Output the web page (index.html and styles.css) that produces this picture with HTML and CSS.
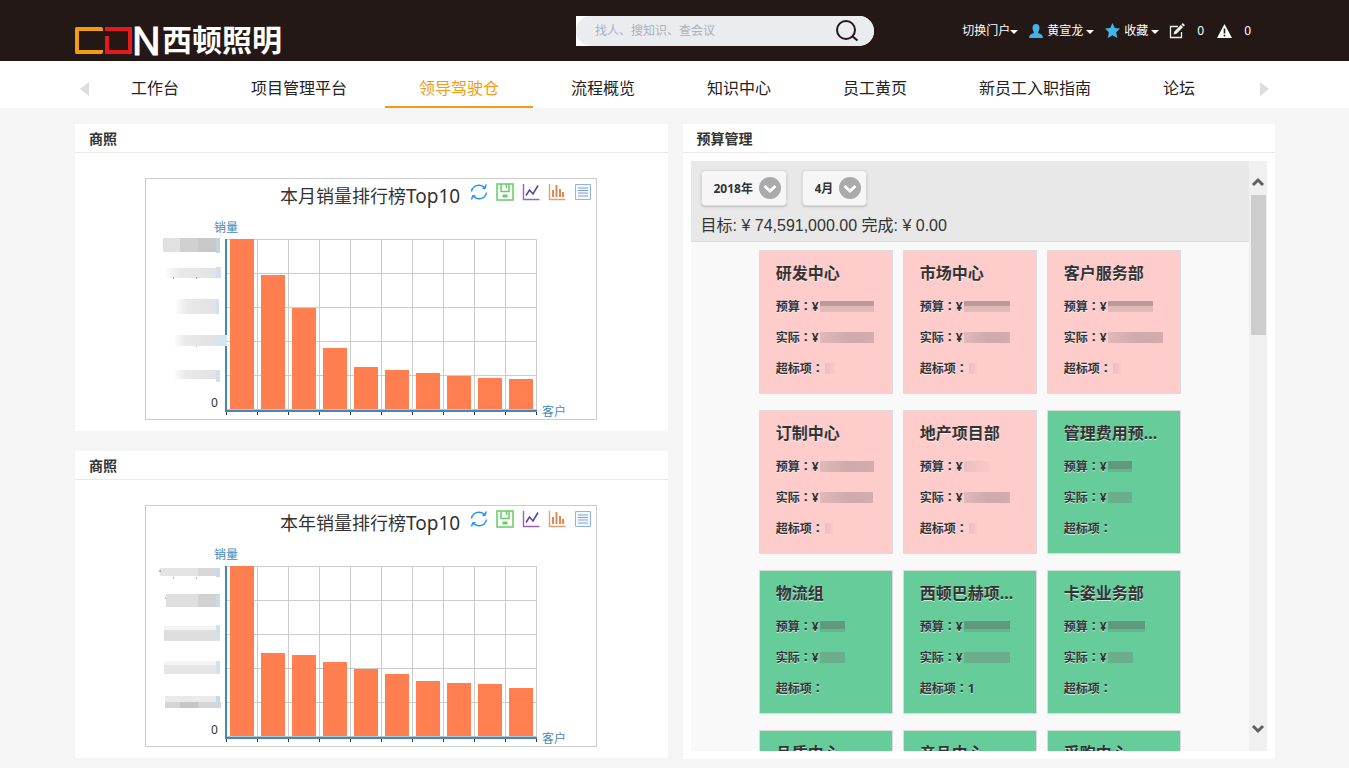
FILE: index.html
```html
<!DOCTYPE html>
<html lang="zh-CN">
<head>
<meta charset="utf-8">
<title>领导驾驶仓</title>
<link rel="stylesheet" href="styles.css">
</head>
<body>
<svg class="defs" width="0" height="0" aria-hidden="true">
  <defs>
    <g id="grid">
      <path d="M82 61.5H392M82 95.5H392M82 129.5H392M82 163.5H392M82 197.5H392" stroke="#ccc"/>
      <path d="M112.500 61V232M143.500 61V232M174.500 61V232M205.500 61V232M236.500 61V232M267.500 61V232M298.500 61V232M329.500 61V232M360.500 61V232M391.500 61V232" stroke="#ccc"/>
    </g>
    <g id="axis">
      <path d="M82 231.500H392" stroke="#b9c3c9"/>
      <path d="M81 61V234M80 233H392" stroke="#4488bb" stroke-width="2"/>
      <path d="M81.500 234V237M112.500 234V237M143.500 234V237M174.500 234V237M205.500 234V237M236.500 234V237M267.500 234V237M298.500 234V237M329.500 234V237M360.500 234V237M391.500 234V237" stroke="#333"/>
    </g>
    <symbol id="i-refresh" viewBox="0 0 18 18"><g fill="none" stroke="#1e90ff" stroke-width="1.500"><path d="M1.500 8.500C2 4.500 5.500 2 9.500 2.200C11.500 2.300 13.200 3.200 14.500 4.500M12.500 5.500L15 5.200L16.200 1.500M16.500 9.500C16 13.500 12.500 16 8.500 15.800C6.500 15.700 4.800 14.800 3.500 13.500M5.500 12.700L2.800 13L1.500 16.500"/></g></symbol>
    <symbol id="i-save" viewBox="0 0 18 18"><g fill="none" stroke="#66cc66" stroke-width="1.500"><path d="M1 1H17V17H1ZM5 1V8.500H13V1M10.500 1V5"/><path d="M6.500 13H11.500" stroke-width="3"/></g></symbol>
    <symbol id="i-line" viewBox="0 0 18 18"><path d="M1.500 1V16.500H17.500" fill="none" stroke="#a060b0" stroke-width="1.400"/><path d="M4 12.500L7.500 7L11 11L16 2.500" fill="none" stroke="#5a3fa0" stroke-width="1.500"/></symbol>
    <symbol id="i-bar" viewBox="0 0 18 18"><path d="M1.500 1V16.500H17.500" fill="none" stroke="#e0a070" stroke-width="1.400"/><path d="M5 7V14M8.500 2V14M12 6V14M15 9V14" stroke="#e08850" stroke-width="2"/></symbol>
    <symbol id="i-data" viewBox="0 0 18 18"><path d="M1.500 1.500H16.500V16.500H1.500Z" fill="#f4f8ff" stroke="#8fb2ea"/><path d="M4 5H14M4 7.500H14M4 10H14M4 13H14" stroke="#7fa0dd"/></symbol>
    <symbol id="i-down" viewBox="0 0 22 22"><circle cx="11" cy="11" r="11" fill="#aaa"/><path d="M5.500 9L11 14L16.500 9" fill="none" stroke="#fff" stroke-width="3"/></symbol>
    <linearGradient id="fade"><stop offset="0" stop-color="#fff"/><stop offset=".3" stop-color="#e9e9e9"/><stop offset="1" stop-color="#e2e2e2"/></linearGradient>
  </defs>
</svg>

<header class="top">
  <a class="logo" href="#" aria-label="CDN 西顿照明">
    <span class="mark-c"></span><span class="mark-d"></span><span class="mark-n">N</span><span class="brand">西顿照明</span>
  </a>
  <form class="search">
    <input type="search" aria-label="搜索" placeholder="找人、搜知识、查会议">
    <button type="button" aria-label="搜索"><svg width="24" height="24" viewBox="0 0 24 24" fill="none" stroke="#231815" stroke-width="2"><circle cx="11" cy="11" r="9"/><path d="M17 17L22.500 21.500"/></svg></button>
  </form>
  <div class="user">
    <button class="u-gate" type="button">切换门户<i class="caret"></i></button>
    <button class="u-name" type="button"><svg width="14" height="14" viewBox="0 0 14 14"><path d="M7 0C9.500 0 10.800 1.800 10.500 4.500C10.300 6.500 9.300 7.500 9 8.300C9 9.800 13.800 9.500 14 14H0C.2 9.500 5 9.800 5 8.300C4.700 7.500 3.700 6.500 3.500 4.500C3.200 1.800 4.500 0 7 0Z" fill="#42b4e6"/></svg><span>黄宣龙</span><i class="caret"></i></button>
    <button class="u-fav" type="button"><svg width="15" height="15" viewBox="0 0 15 15"><path d="M7.500 0L9.800 5L15 5.600L11.200 9.300L12.200 15L7.500 12.300L2.800 15L3.800 9.300L0 5.600L5.200 5Z" fill="#42b4e6"/></svg><span>收藏</span><i class="caret"></i></button>
    <a class="u-count" href="#"><svg width="16" height="16" viewBox="0 0 16 16"><path d="M9 3.500H1.500V14.500H12.500V9" fill="none" stroke="#eee" stroke-width="1.300"/><path d="M4.500 11.500L5.300 8.500L11.800 2L14 4.200L7.500 10.700ZM12.400 1.400L13.800 0L16 2.200L14.600 3.600Z" fill="#eee"/></svg><span>0</span></a>
    <a class="u-count" href="#"><svg width="15" height="14" viewBox="0 0 15 14"><path d="M7.500 0L15 14H0Z" fill="#fff"/><path d="M7.500 4.500V9.500M7.500 10.700V12.500" stroke="#231815" stroke-width="1.600"/></svg><span>0</span></a>
  </div>
</header>

<nav class="nav">
  <button class="arrow prev" type="button" aria-label="上一页"></button>
  <div class="tabs">
    <a href="#">工作台</a><a href="#">项目管理平台</a><a class="on" href="#">领导驾驶仓</a><a href="#">流程概览</a><a href="#">知识中心</a><a href="#">员工黄页</a><a href="#">新员工入职指南</a><a href="#">论坛</a>
  </div>
  <button class="arrow next" type="button" aria-label="下一页"></button>
</nav>

<main class="board">
  <div class="col">
    <section class="panel">
      <h2>商照</h2>
      <div class="chart">
        <svg width="450" height="240" viewBox="1 1 450 240" role="img" aria-label="本月销量排行榜Top10">
          <use href="#grid"/>
          <g fill="#ff7f50">
            <rect x="85" y="61" width="24" height="171"/><rect x="116" y="97" width="24" height="135"/><rect x="147" y="130" width="24" height="102"/><rect x="178" y="170" width="24" height="62"/><rect x="209" y="189" width="24" height="43"/><rect x="240" y="192" width="24" height="40"/><rect x="271" y="195" width="24" height="37"/><rect x="302" y="198" width="24" height="34"/><rect x="333" y="200" width="24" height="32"/><rect x="364" y="201" width="24" height="31"/>
          </g>
          <use href="#axis"/>
          <g>
            <rect x="18" y="60" width="17" height="14" fill="#e1e1e1"/><rect x="35" y="60" width="18" height="14" fill="#d0d0d0"/><rect x="53" y="60" width="18" height="14" fill="#c8c8c8"/><rect x="71" y="60" width="4" height="15" fill="#c3d3e0"/>
            <rect x="19" y="90" width="53" height="10" fill="url(#fade)"/><rect x="71" y="89" width="5" height="11" fill="#d0e0ee"/>
            <path d="M28 100H29M51 100H52M51 168H52" stroke="#666"/>
            <rect x="30" y="121" width="41" height="15" fill="url(#fade)"/><rect x="71" y="121" width="3" height="15" fill="#d0e0ee"/>
            <rect x="28" y="157" width="43" height="11" fill="url(#fade)"/><rect x="71" y="157" width="11" height="11" fill="#d6e4ee"/>
            <rect x="28" y="192" width="43" height="9" fill="url(#fade)"/><rect x="71" y="192" width="4" height="12" fill="#d0e0ee"/>
          </g>
          <text class="c-title" x="135" y="25">本月销量排行榜<tspan class="c-top">Top10</tspan></text>
          <text class="c-unit" x="69" y="54">销量</text>
          <text class="c-unit" x="397" y="238">客户</text>
          <text class="c-num" x="66" y="229">0</text>
        </svg>
        <div class="tools">
          <button type="button" aria-label="还原"><svg width="18" height="18"><use href="#i-refresh"/></svg></button>
          <button type="button" aria-label="保存"><svg width="18" height="18"><use href="#i-save"/></svg></button>
          <button type="button" aria-label="折线图"><svg width="18" height="18"><use href="#i-line"/></svg></button>
          <button type="button" aria-label="柱状图"><svg width="18" height="18"><use href="#i-bar"/></svg></button>
          <button type="button" aria-label="数据视图"><svg width="18" height="18"><use href="#i-data"/></svg></button>
        </div>
      </div>
    </section>
    <section class="panel">
      <h2>商照</h2>
      <div class="chart">
        <svg width="450" height="240" viewBox="1 1 450 240" role="img" aria-label="本年销量排行榜Top10">
          <use href="#grid"/>
          <g fill="#ff7f50">
            <rect x="85" y="61" width="24" height="171"/><rect x="116" y="148" width="24" height="84"/><rect x="147" y="150" width="24" height="82"/><rect x="178" y="157" width="24" height="75"/><rect x="209" y="164" width="24" height="68"/><rect x="240" y="169" width="24" height="63"/><rect x="271" y="176" width="24" height="56"/><rect x="302" y="178" width="24" height="54"/><rect x="333" y="179" width="24" height="53"/><rect x="364" y="183" width="24" height="49"/>
          </g>
          <use href="#axis"/>
          <g>
            <rect x="15" y="63" width="38" height="8" fill="#e4e4e4"/><rect x="53" y="63" width="18" height="8" fill="#d8d8d8"/><rect x="71" y="63" width="4" height="9" fill="#c9dae8"/>
            <path d="M14 66H16M28 73H29M51 73H52M20 93H22" stroke="#777"/>
            <rect x="21" y="89" width="32" height="13" fill="#dfdfdf"/><rect x="53" y="89" width="18" height="13" fill="#d2d2d2"/><rect x="71" y="89" width="4" height="13" fill="#c9dae8"/>
            <rect x="19" y="121" width="52" height="4" fill="#f4f4f4"/><rect x="19" y="125" width="52" height="11" fill="#dedede"/><rect x="71" y="120" width="4" height="16" fill="#d0e0ee"/>
            <rect x="19" y="156" width="52" height="4" fill="#f4f4f4"/><rect x="19" y="160" width="52" height="9" fill="#e6e6e6"/><rect x="71" y="156" width="4" height="13" fill="#d0e0ee"/>
            <rect x="20" y="191" width="51" height="6" fill="#eaeaea"/><rect x="20" y="197" width="56" height="6" fill="#d4d4d4"/><rect x="35" y="197" width="18" height="6" fill="#c6c6c6"/><rect x="71" y="191" width="4" height="12" fill="#c9d9e6"/>
          </g>
          <text class="c-title" x="135" y="25">本年销量排行榜<tspan class="c-top">Top10</tspan></text>
          <text class="c-unit" x="69" y="54">销量</text>
          <text class="c-unit" x="397" y="238">客户</text>
          <text class="c-num" x="66" y="229">0</text>
        </svg>
        <div class="tools">
          <button type="button" aria-label="还原"><svg width="18" height="18"><use href="#i-refresh"/></svg></button>
          <button type="button" aria-label="保存"><svg width="18" height="18"><use href="#i-save"/></svg></button>
          <button type="button" aria-label="折线图"><svg width="18" height="18"><use href="#i-line"/></svg></button>
          <button type="button" aria-label="柱状图"><svg width="18" height="18"><use href="#i-bar"/></svg></button>
          <button type="button" aria-label="数据视图"><svg width="18" height="18"><use href="#i-data"/></svg></button>
        </div>
      </div>
    </section>
  </div>

  <section class="panel budget">
    <h2>预算管理</h2>
    <div class="pane">
      <div class="view">
        <div class="filter">
          <div class="selects">
            <div class="pick"><select class="year" aria-label="年份"><option>2018年</option></select><svg width="22" height="22"><use href="#i-down"/></svg></div>
            <div class="pick"><select class="month" aria-label="月份"><option>4月</option></select><svg width="22" height="22"><use href="#i-down"/></svg></div>
          </div>
          <p>目标: ¥ 74,591,000.00 完成: ¥ 0.00</p>
        </div>
        <div class="cards">
          <article class="card over"><h3>研发中心</h3><p>预算：¥<i class="m dark" style="width:54px"></i></p><p>实际：¥<i class="m" style="width:54px"></i></p><p>超标项：<i class="m faint" style="width:10px"></i></p></article>
          <article class="card over"><h3>市场中心</h3><p>预算：¥<i class="m dark" style="width:46px"></i></p><p>实际：¥<i class="m" style="width:46px"></i></p><p>超标项：<i class="m faint" style="width:8px"></i></p></article>
          <article class="card over"><h3>客户服务部</h3><p>预算：¥<i class="m dark" style="width:45px"></i></p><p>实际：¥<i class="m" style="width:55px"></i></p><p>超标项：<i class="m faint" style="width:8px"></i></p></article>
          <article class="card over"><h3>订制中心</h3><p>预算：¥<i class="m" style="width:54px"></i></p><p>实际：¥<i class="m" style="width:53px"></i></p><p>超标项：<i class="m faint" style="width:8px"></i></p></article>
          <article class="card over"><h3>地产项目部</h3><p>预算：¥<i class="m faint" style="width:26px"></i></p><p>实际：¥<i class="m" style="width:46px"></i></p><p>超标项：<i class="m faint" style="width:8px"></i></p></article>
          <article class="card"><h3>管理费用预...</h3><p>预算：¥<i class="m dark" style="width:24px"></i></p><p>实际：¥<i class="m" style="width:24px"></i></p><p>超标项：</p></article>
          <article class="card"><h3>物流组</h3><p>预算：¥<i class="m dark" style="width:25px"></i></p><p>实际：¥<i class="m" style="width:25px"></i></p><p>超标项：</p></article>
          <article class="card"><h3>西顿巴赫项...</h3><p>预算：¥<i class="m dark" style="width:46px"></i></p><p>实际：¥<i class="m" style="width:46px"></i></p><p>超标项：1</p></article>
          <article class="card"><h3>卡姿业务部</h3><p>预算：¥<i class="m dark" style="width:37px"></i></p><p>实际：¥<i class="m" style="width:25px"></i></p><p>超标项：</p></article>
          <article class="card"><h3>品质中心</h3></article>
          <article class="card"><h3>产品中心</h3></article>
          <article class="card"><h3>采购中心</h3></article>
        </div>
      </div>
      <div class="bar">
        <svg width="14" height="10" viewBox="0 0 14 10"><path d="M2 8L7 3L12 8" fill="none" stroke="#606060" stroke-width="3"/></svg>
        <div class="thumb"></div>
        <svg class="dn" width="14" height="10" viewBox="0 0 14 10"><path d="M2 2L7 7L12 2" fill="none" stroke="#606060" stroke-width="3"/></svg>
      </div>
    </div>
  </section>
</main>
</body>
</html>
```
FILE: styles.css
```css
* { box-sizing: border-box; }
body {
  margin: 0;
  background: #f5f5f5;
  color: #333;
  font: 12px/1.5 "Noto Sans", "Noto Sans CJK SC", sans-serif;
}
h2, h3, p { margin: 0; }
a { color: inherit; text-decoration: none; }
button { border: 0; padding: 0; background: none; color: inherit; font: inherit; }
svg { display: block; }
.defs { position: absolute; }

.top {
  display: grid;
  grid-template-columns: 501fr 298px 400fr;
  align-items: center;
  height: 61px;
  padding: 0 75px;
  background: #231815;
  color: #fff;
}
.logo { display: flex; align-items: center; height: 27px; margin-top: 20px; }
.mark-c { width: 28px; height: 27px; border: 4px solid #f39c12; border-right: 0; border-radius: 2px; }
.mark-d {
  width: 27px; height: 27px; margin-left: 2px;
  border: 4px solid #e8191c; border-left: 0;
  background: linear-gradient(#e8191c, #e8191c) 0 100% / 4px 14px no-repeat;
}
.mark-n { width: 30px; padding-top: 2px; font: 38px/27px Inter, sans-serif; -webkit-text-stroke: 1px #fff; }
.brand { padding-bottom: 4px; font: bold 30px/27px "Noto Sans CJK SC", sans-serif; white-space: nowrap; }

.search {
  display: flex;
  position: relative;
  height: 30px;
  background: #fff;
  border-radius: 0 15px 15px 0;
}
.search input {
  flex: 1;
  min-width: 0;
  border: 0;
  border-radius: 15px;
  padding: 0 50px 0 19px;
  background: #ebecf0;
  font: inherit;
  outline: 0;
}
.search input::placeholder { color: #a9b1ba; opacity: 1; }
.search button { position: absolute; right: 15px; top: 3px; }

.user { display: flex; align-items: center; justify-content: flex-end; padding-right: 23px; white-space: nowrap; }
.user button, .user a { display: flex; align-items: center; }
.user span { margin-left: 4px; }
.caret { border: 4px solid transparent; border-top-color: #fff; border-bottom: 0; margin: 3px 0 0 3px; }
.user .u-gate .caret { margin-left: 0; }
.user .u-name, .user .u-fav { margin-left: 11px; }
.u-count { margin-left: 10px; }
.u-count + .u-count { margin-left: 13px; }
.user .u-count span { margin-left: 12px; }

.nav { display: flex; justify-content: space-between; align-items: center; height: 47px; padding: 0 80px; background: #fff; }
.tabs { display: flex; gap: 4px; height: 47px; margin-right: 23px; }
.tabs a {
  height: 47px;
  padding: 7px 34px 0;
  border-bottom: 2px solid transparent;
  color: #222;
  font-size: 16px;
  line-height: 40px;
  white-space: nowrap;
}
.tabs .on { color: #f39c12; border-color: #f39c12; }
.arrow { border: solid transparent; border-width: 7px 0; margin-top: 9px; }
.prev { border-right: 9px solid #ddd; }
.next { border-left: 9px solid #ddd; }

.board { display: grid; grid-template-columns: 1fr 1fr; gap: 15px; padding: 16px 74px 10px 75px; }
.col { display: grid; gap: 20px; align-content: start; }
.panel { background: #fff; }
.panel h2 { height: 29px; padding: 0 14px; border-bottom: 1px solid #e8e8e8; font-size: 14px; line-height: 29px; }
.chart { position: relative; width: 452px; margin: 25px 0 11px 70px; border: 1px solid #ccc; }
.col .panel { padding-bottom: 11px; }
.col .chart { margin-bottom: 0; }
.tools { position: absolute; top: 4px; right: 4px; display: flex; gap: 8px; }
.c-title { font-size: 18px; fill: #333; }
.c-top { font-size: 19px; }
.c-unit { font-size: 12px; fill: #4488bb; }
.c-num { font-size: 12px; fill: #333; }

.pane { display: flex; height: 590px; margin: 8px; background: #f9f9f9; }
.view { flex: 1; min-width: 0; overflow: hidden; }
.filter { padding: 9px 10px 0; background: #e8e8e8; border-bottom: 1px solid #ddd; }
.filter p { padding-top: 4px; font: 16px/31px "Liberation Sans", "Noto Sans CJK SC", sans-serif; }
.selects { display: flex; gap: 15px; }
.pick { position: relative; }
.pick svg { position: absolute; right: 6px; top: 7px; pointer-events: none; }
.pick select {
  appearance: none;
  display: block;
  height: 36px;
  padding: 0 32px 0 12px;
  border: 1px solid #ddd;
  border-radius: 4px;
  background: #f6f6f6;
  box-shadow: 0 1px 2px #bbb;
  color: #333;
  font: bold 12px "Noto Sans", "Noto Sans CJK SC", sans-serif;
}
.year { width: 86px; }
.month { width: 65px; }

.cards { display: grid; grid-template-columns: repeat(3, 134px); gap: 16px 10px; justify-content: center; padding-top: 8px; }
.card {
  height: 144px;
  padding: 9px 16px;
  border: 1px solid #dcdcdc;
  background: #66cc99;
  font-weight: bold;
  text-shadow: 0 1px 0 #ffffffb0;
}
.over { background: #ffcccc; }
.card h3 { margin-bottom: 5px; font-size: 16px; line-height: 26px; white-space: nowrap; }
.card p {
  display: flex;
  align-items: center;
  font-family: "Noto Sans", "Noto Sans CJK TC", sans-serif;
  font-feature-settings: "locl" 0;
  line-height: 31px;
  white-space: nowrap;
}
.m { height: 11px; margin-left: 1px; background: #6aae8c; }
.dark { background: linear-gradient(#5f9a7c 70%, #66b48c 70%); }
.over .m { background: linear-gradient(90deg, #e0b9b9, #cfabab 50%, #d3acac); }
.over .dark { background: linear-gradient(#bd9a9a 45%, #e0b9b9 45%); }
.over .faint { background: linear-gradient(90deg, #eabfbf, #fac9c9); }

.bar { display: flex; flex-direction: column; align-items: center; width: 18px; padding: 16px 0 17px; background: #f0f0f0; }
.thumb { width: 15px; height: 140px; margin-top: 8px; background: #cdcdcd; }
.dn { margin-top: auto; }
```
